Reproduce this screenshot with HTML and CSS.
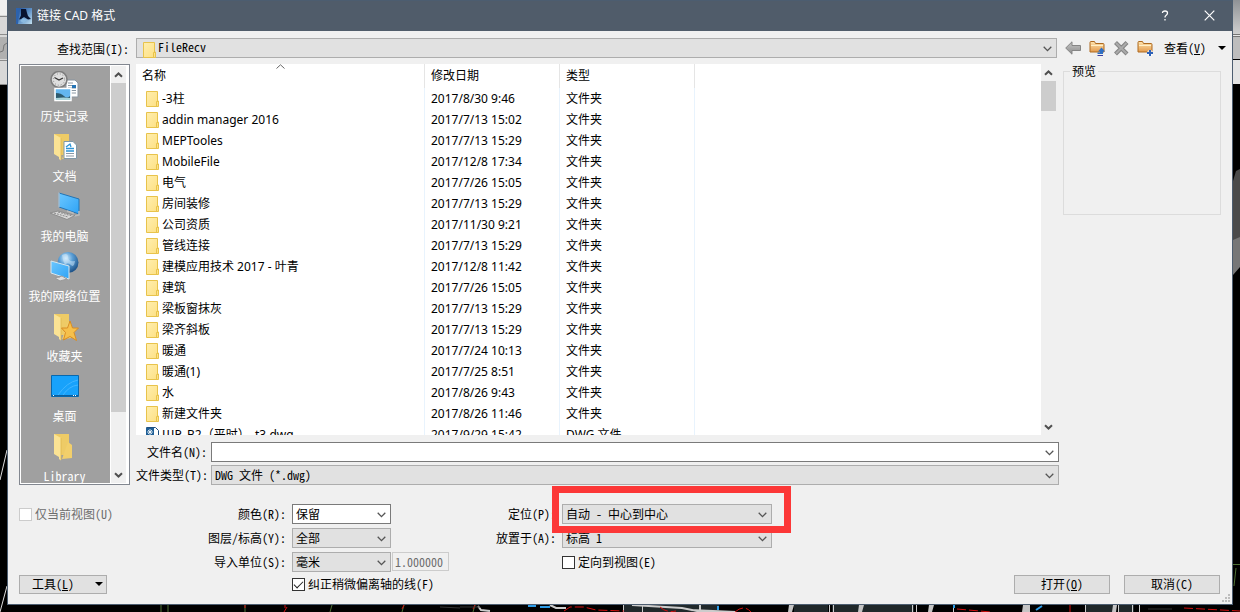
FILE: index.html
```html
<!DOCTYPE html>
<html lang="zh-CN">
<head>
<meta charset="utf-8">
<title>链接 CAD 格式</title>
<link rel="stylesheet" href="styles.css">
</head>
<body>
<svg width="0" height="0" class="defs" aria-hidden="true">
  <defs>
    <linearGradient id="gold" x1="0" y1="0" x2="1" y2="1"><stop offset="0" stop-color="#ffeeae"/><stop offset="1" stop-color="#fde083"/></linearGradient>
    <linearGradient id="orange" x1="0" y1="0" x2="0" y2="1"><stop offset="0" stop-color="#ffe5b0"/><stop offset="1" stop-color="#e39a4c"/></linearGradient>
    <linearGradient id="screen" x1="0" y1="0" x2="1" y2="1"><stop offset="0" stop-color="#6cc7ff"/><stop offset="1" stop-color="#2ea3f5"/></linearGradient>
    <linearGradient id="grey" x1="0" y1="0" x2="0" y2="1"><stop offset="0" stop-color="#c6c6c6"/><stop offset="1" stop-color="#8c8c8c"/></linearGradient>
    <radialGradient id="globe" cx=".4" cy=".3" r=".7"><stop offset="0" stop-color="#d5efff"/><stop offset=".45" stop-color="#5b9fd6"/><stop offset="1" stop-color="#1d5288"/></radialGradient>
    <linearGradient id="logo" x1="0" y1="0" x2="1" y2="1"><stop offset="0" stop-color="#1a4a94"/><stop offset=".5" stop-color="#5c8fc6"/><stop offset="1" stop-color="#c4e2f2"/></linearGradient>
    <linearGradient id="ribbon" x1="0" y1="0" x2="0" y2="1"><stop offset="0" stop-color="#8f9296"/><stop offset="1" stop-color="#cfcfcf"/></linearGradient>
  </defs>
  <symbol id="folder" viewBox="0 0 13 16"><path d="M.5.5h11v9.500h1v5.500H.5z" fill="url(#gold)" stroke="#e8c34b"/><path d="M10.500 15v-4.500h1.500" fill="none" stroke="#e8c34b"/></symbol>
  <symbol id="chev" viewBox="0 0 9 6"><path d="M.7.8 4.500 4.600 8.300.8" fill="none" stroke="#555" stroke-width="1.300"/></symbol>
  <symbol id="thick" viewBox="0 0 9 6"><path d="M1 4.700 4.500 1.400 8 4.700" fill="none" stroke="#505050" stroke-width="2"/></symbol>
  <symbol id="open-folder" viewBox="0 0 32 32"><path d="M5 3h15v21H8z" fill="#eecb66"/><path d="M19 11l4 3v13l-10 1z" fill="#f2cf6b"/><path d="M5 3l7 4v22.500l-2-1.500V26l-5-3z" fill="#fbe394"/><path d="M12 7v22" stroke="#e0b74e" stroke-width=".8"/></symbol>
</svg>

<svg class="backdrop" viewBox="0 0 1240 612" preserveAspectRatio="none" aria-hidden="true">
  <rect width="1240" height="612" fill="#000"/>
  <rect width="7" height="85" fill="#d8d8d8"/><rect width="7" height="15" fill="#f0f0f0"/>
  <path d="M0 16.500h7M0 34.500h7M0 60.500h7M0 84.500h7" stroke="#8c8c8c"/><rect y="37" width="7" height="22" fill="#b0b0b0"/>
  <path d="M0 52l3-1 1-6 3-2" fill="none" stroke="#777"/>
  <path d="M7 450 0 480M7 586 0 612" stroke="#ddd"/>
  <rect x="1233" width="7" height="34" fill="url(#ribbon)"/><rect x="1233" y="37" width="7" height="22" fill="#bdbdbd"/><rect x="1233" y="60" width="7" height="24" fill="#e4e4e4"/>
  <path d="M1233 35.500h7" stroke="#e8e8e8" stroke-width="2"/><path d="M1240 169l-4 2-3 10v59l7 0z" fill="#4a4a4a"/>
  <path d="M1233 240l7-3v30l-7 8z" fill="#777"/>
  <path d="M161 605v7M168 605v7M245 605v7M332 605l-2 7M404 605l-2 7M475 605l-2 7M1236 568l-2 18M1233 564.500h7" stroke="#4f7036"/>
  <path d="M245 605v3M285 605v3M287 607l-3 5M404 605l-2 4M475 605l-2 4M1070 612v-7" stroke="#d40f0f" fill="none"/>
  <path d="M623 605h20v7h-20zM643 605h76v7h-76zM794 605h34v7h-34zM832 605h82v7h-82zM869 605h42v7h-42zM1085 605h30v7h-30zM1119 605h15v7h-15z" fill="#20282a"/>
  <path d="M623.500 605v7M642.500 605v7M829.500 605v7M833.500 605v7M912.500 605v7M916.500 605v7M953.500 605v7M1085.500 605v7M1118.500 605v7M1132.500 605v7M1139.500 605v7" stroke="#ccc"/>
  <path d="M789 605h5l-2 7h-4zM859 605h5l-2 7h-4zM929 605h5l-2 7h-4zM1023 605h7v7h-8zM1113 605h4l-1 7h-4z" fill="#c4c4c4"/>
  <path d="M478 606l3 4 9 1M550 605l6 3h10M632 605l50 3 20 4M690 610l46 2M700 605v5" fill="none" stroke="#ccc" stroke-width="2"/>
  <path d="M440 607l20 1M460 607h20M1148 609h24" stroke="#333"/>
  <path d="M564 611l6-4h14l12 3 28 1M660 607q6 6 16 4M735 612q9-8 16 0M957 609l34 3M1184 608l56 3" fill="none" stroke="#d40f0f" stroke-dasharray="9 3"/>
  <path d="M528 606h8M540 607h10M718 606v4M954 605v3M1036 610l6-4" stroke="#2c9ce8" stroke-width="2"/>
</svg>

<main class="window">
  <header class="titlebar">
    <svg class="logo" viewBox="0 0 16 16" aria-hidden="true"><rect width="16" height="16" fill="url(#logo)"/><path d="M0 0h4L2 16H0z" fill="#2c62ad"/><path d="M5 1h5l1 4 1 3 3 3-3 .500-4-2.500-3 2-2 .500 2-4z" fill="#08122f"/><path d="M4 13l3-3 4 2-3 3z" fill="#8cbbe2"/></svg>
    <h1>链接 CAD 格式</h1>
    <button class="cap" aria-label="帮助"><svg width="8" height="11" viewBox="0 0 8 11"><path d="M1.500 3q0-2 2.500-2t2.500 2q0 1.300-1.300 2.200T4 7.500M4 9v1.500" fill="none" stroke="#fff" stroke-width="1.300"/></svg></button>
    <button class="cap" aria-label="关闭"><svg width="11" height="11" viewBox="0 0 11 11"><path d="M.7.700l9.600 9.600M10.300.7.700 10.300" stroke="#fff" stroke-width="1.200"/></svg></button>
  </header>

  <section class="lookin">
    <label class="lookin-label" for="look">查找范围(I):</label>
    <div class="combo lookin-combo">
      <svg class="combo-icon" aria-hidden="true"><use href="#folder"/></svg>
      <select id="look"><option>FileRecv</option></select>
      <svg class="chev"><use href="#chev"/></svg>
    </div>
    <nav class="toolbar">
      <button aria-label="后退"><svg viewBox="0 0 16 16"><path d="M.7 8 7 1.800V5.500h8.500v5H7v3.700z" fill="url(#grey)" stroke="#858585"/></svg></button>
      <button aria-label="向上一级"><svg viewBox="0 0 16 16"><path d="M1 12V2.500q0-1 1-1h3.500l1 2H14q1 0 1 1V12z" fill="url(#orange)" stroke="#ae6a20"/><path d="M2 5.500h12" stroke="#fff0c8"/><path d="M12.500 7.500l3.500 4h-2V14H8.500v-1.500H11v-1H9z" fill="#2e6fc4"/><path d="M8.500 15.500h5.500" stroke="#3a3f9e"/></svg></button>
      <button aria-label="删除"><svg viewBox="0 0 16 16"><path d="M2.500 2.500l11.500 11.500M14 2.500 2.500 14" stroke="#858585" stroke-width="4.200"/><path d="M3 3l10.500 10.500M13.500 3 3 13.500" stroke="#aaa" stroke-width="2"/></svg></button>
      <button aria-label="新建文件夹"><svg viewBox="0 0 16 16"><path d="M1 12V2.500q0-1 1-1h3.500l1 2H14q1 0 1 1V12z" fill="url(#orange)" stroke="#ae6a20"/><path d="M2 5.500h12" stroke="#fff0c8"/><path d="M10 13h6M13 10v6" stroke="#fff" stroke-width="3"/><path d="M10 13h6M13 10v6" stroke="#2e62b8" stroke-width="2"/></svg></button>
      <button class="view"><span>查看(<u>V</u>)</span><svg class="tri" viewBox="0 0 8 4"><path d="M0 0h8L4 4z"/></svg></button>
    </nav>
  </section>

  <section class="browse">
    <aside class="places">
      <ul>
        <li><a href="#"><svg viewBox="0 0 32 32"><path d="M17 9h9l3 3v14H17z" fill="#fff" stroke="#8995a0"/><path d="M19 12h5M19 14.500h5M19 17h8M19 19.500h8M19 22h8" stroke="#8a98a4"/><path d="M23 14h4v3h-4z" fill="#2474b5"/><circle cx="10" cy="8.500" r="8" fill="#dedede" stroke="#7e7e7e" stroke-width="1.600"/><circle cx="10" cy="8.500" r="5.700" fill="none" stroke="#888" stroke-dasharray="1 2"/><path d="M5.500 6.500 10 9l4-2" fill="none" stroke="#333" stroke-width="1.300"/><path d="M6 17.500h16v12H6z" fill="#63b6ef" stroke="#fff" stroke-width="1.500"/><path d="M7 22q5 0 8 3t6 0v2H7z" fill="#2d5a6e"/><path d="M7 27q8-1 14 0v2H7z" fill="#a9d5da"/></svg><span>历史记录</span></a></li>
        <li><a href="#"><svg viewBox="0 0 32 32"><use href="#open-folder"/><path d="M15 10.500h9l3.500 3.500v13.500H15z" fill="#fff" stroke="#7f98a8"/><path d="M17 16l4-3 1 3M17 17.500h8M17 20h8" fill="none" stroke="#2d94d6" stroke-width="1.300"/><path d="M17 22.500h8M17 25h8" stroke="#8a98a4"/></svg><span>文档</span></a></li>
        <li><a href="#"><svg viewBox="0 0 32 32"><path d="M10 2l20 6v15L10 16z" fill="url(#screen)" stroke="#2374b4"/><path d="M10 1.700v14.500" stroke="#ddd"/><path d="M30 20v4l-5 1M18 20l6 2v3" fill="none" stroke="#bbb" stroke-width="1.500"/><path d="M1 22l8-2 17 4.500-8 4z" fill="#d9d9d9" stroke="#8d8d8d"/><path d="M5 22l14 4M9 21l14 4" stroke="#888" stroke-dasharray="2 1"/></svg><span>我的电脑</span></a></li>
        <li><a href="#"><svg viewBox="0 0 32 32"><circle cx="19" cy="11.500" r="10.500" fill="url(#globe)"/><path d="M13 4q6-3 6 2t7 4q-1 7-4 4t-5-1-4-9z" fill="#d3eafa" opacity=".5"/><path d="M2 10l18 5v13L2 22z" fill="url(#screen)" stroke="#d7e6ee"/><path d="M10 25v2M6 27l7-2 5 3-7 2z" fill="#ddd" stroke="#999"/></svg><span>我的网络位置</span></a></li>
        <li><a href="#"><svg viewBox="0 0 32 32"><use href="#open-folder"/><path d="M21 10l2.500 7h6l-4.500 4.500 2.500 8-6.500-4-6.500 3.500 2-7.500-4-4.500h6z" fill="#f6c04b" stroke="#d88c24"/></svg><span>收藏夹</span></a></li>
        <li><a href="#"><svg viewBox="0 0 32 32"><path d="M2.500 4.500h27v21h-27z" fill="#18a2fb" stroke="#0868ad"/><path d="M9 24Q18 11 29 9M14 24q6-9 15-10" fill="none" stroke="#42b5ff"/><path d="M3 24.500h26" stroke="#0b5f9e"/><path d="M4 24.500h1M24 24.500h4" stroke="#fff" stroke-dasharray="1 1"/></svg><span>桌面</span></a></li>
        <li><a href="#"><svg viewBox="0 0 32 32"><use href="#open-folder"/></svg><span>Library</span></a></li>
      </ul>
      <div class="scroll places-scroll"><svg class="arrow"><use href="#thick"/></svg><i></i><svg class="arrow down"><use href="#thick"/></svg></div>
    </aside>

    <div class="center">
      <div class="listing">
        <div class="files">
          <svg class="sort" viewBox="0 0 9 5"><path d="M.5 4.500 4.500.8l4 3.700" fill="none" stroke="#666"/></svg>
          <table>
            <colgroup><col class="c-name"><col class="c-date"><col class="c-type"><col></colgroup>
            <thead><tr><th>名称</th><th>修改日期</th><th>类型</th><th></th></tr></thead>
            <tbody>
              <tr><td><svg><use href="#folder"/></svg>-3柱</td><td>2017/8/30 9:46</td><td>文件夹</td><td></td></tr>
              <tr><td><svg><use href="#folder"/></svg>addin manager 2016</td><td>2017/7/13 15:02</td><td>文件夹</td><td></td></tr>
              <tr><td><svg><use href="#folder"/></svg>MEPTooles</td><td>2017/7/13 15:29</td><td>文件夹</td><td></td></tr>
              <tr><td><svg><use href="#folder"/></svg>MobileFile</td><td>2017/12/8 17:34</td><td>文件夹</td><td></td></tr>
              <tr><td><svg><use href="#folder"/></svg>电气</td><td>2017/7/26 15:05</td><td>文件夹</td><td></td></tr>
              <tr><td><svg><use href="#folder"/></svg>房间装修</td><td>2017/7/13 15:29</td><td>文件夹</td><td></td></tr>
              <tr><td><svg><use href="#folder"/></svg>公司资质</td><td>2017/11/30 9:21</td><td>文件夹</td><td></td></tr>
              <tr><td><svg><use href="#folder"/></svg>管线连接</td><td>2017/7/13 15:29</td><td>文件夹</td><td></td></tr>
              <tr><td><svg><use href="#folder"/></svg>建模应用技术 2017 - 叶青</td><td>2017/12/8 11:42</td><td>文件夹</td><td></td></tr>
              <tr><td><svg><use href="#folder"/></svg>建筑</td><td>2017/7/26 15:05</td><td>文件夹</td><td></td></tr>
              <tr><td><svg><use href="#folder"/></svg>梁板窗抹灰</td><td>2017/7/13 15:29</td><td>文件夹</td><td></td></tr>
              <tr><td><svg><use href="#folder"/></svg>梁齐斜板</td><td>2017/7/13 15:29</td><td>文件夹</td><td></td></tr>
              <tr><td><svg><use href="#folder"/></svg>暖通</td><td>2017/7/24 10:13</td><td>文件夹</td><td></td></tr>
              <tr><td><svg><use href="#folder"/></svg>暖通(1)</td><td>2017/7/25 8:51</td><td>文件夹</td><td></td></tr>
              <tr><td><svg><use href="#folder"/></svg>水</td><td>2017/8/26 9:43</td><td>文件夹</td><td></td></tr>
              <tr><td><svg><use href="#folder"/></svg>新建文件夹</td><td>2017/8/26 11:46</td><td>文件夹</td><td></td></tr>
              <tr><td><svg viewBox="0 0 13 16"><path d="M.5.5h9l3 3V15H.5z" fill="#fff" stroke="#1f4f80"/><path d="M0 1h8v8H0z" fill="#1f5f96"/><path d="M1 5h6M4 2v6M2 3l4 4M6 3 2 7" stroke="#fff" stroke-width=".8"/><path d="M0 8h13v7H0z" fill="#1f5f96"/></svg>ШР_B2（平时）_t3.dwg</td><td>2017/9/29 15:42</td><td>DWG 文件</td><td></td></tr>
            </tbody>
          </table>
        </div>
        <div class="scroll list-scroll"><svg class="arrow"><use href="#thick"/></svg><i></i><svg class="arrow down"><use href="#thick"/></svg></div>
      </div>
      <div class="field">
        <label for="fname">文件名(N):</label>
        <div class="combo white"><input id="fname" type="text"><svg class="chev"><use href="#chev"/></svg></div>
      </div>
      <div class="field">
        <label for="ftype">文件类型(T):</label>
        <div class="combo"><select id="ftype"><option>DWG 文件 (*.dwg)</option></select><svg class="chev"><use href="#chev"/></svg></div>
      </div>
    </div>

    <fieldset class="preview"><legend>预览</legend></fieldset>
  </section>

  <section class="options">
    <label class="check dim a1"><input type="checkbox" disabled>仅当前视图(U)</label>
    <label class="cap-label b1" for="color">颜色(R):</label>
    <div class="combo white short c1"><select id="color"><option>保留</option></select><svg class="chev"><use href="#chev"/></svg></div>
    <label class="cap-label d1" for="pos">定位(P):</label>
    <div class="combo e1"><select id="pos"><option>自动 - 中心到中心</option></select><svg class="chev"><use href="#chev"/></svg><span class="highlight"></span></div>

    <label class="cap-label b2" for="layer">图层/标高(Y):</label>
    <div class="combo short c2"><select id="layer"><option>全部</option></select><svg class="chev"><use href="#chev"/></svg></div>
    <label class="cap-label d2" for="place">放置于(A):</label>
    <div class="combo e2"><select id="place"><option>标高 1</option></select><svg class="chev"><use href="#chev"/></svg></div>

    <label class="cap-label b3" for="unit">导入单位(S):</label>
    <div class="unit c3">
      <div class="combo short"><select id="unit"><option>毫米</option></select><svg class="chev"><use href="#chev"/></svg></div>
      <input class="factor" type="text" value="1.000000" aria-label="单位比例" disabled>
    </div>
    <label class="check e3"><input type="checkbox">定向到视图(E)</label>

    <div class="a4"><button class="btn tools"><span>工具(<u>L</u>)</span><svg class="tri" viewBox="0 0 8 4"><path d="M0 0h8L4 4z"/></svg></button></div>
    <label class="check c4"><input type="checkbox" checked>纠正稍微偏离轴的线(F)</label>
    <div class="actions"><button class="btn">打开(<u>O</u>)</button><button class="btn">取消(C)</button></div>
  </section>
  <svg class="grip" viewBox="0 0 8 8" aria-hidden="true"><path d="M6 0h2v2H6zM3 3h2v2H3zM6 3h2v2H6zM0 6h2v2H0zM3 6h2v2H3zM6 6h2v2H6z" fill="#bdbdbd"/></svg>
</main>
</body>
</html>
```

FILE: styles.css
```css
* { box-sizing: border-box; }
body {
  margin: 0;
  height: 100vh;
  overflow: hidden;
  background: #000;
  font: 12px/16px "Noto Sans Mono CJK SC", "Liberation Mono", "Noto Sans CJK SC", monospace;
  color: #000;
}
button, input, select { font: inherit; color: inherit; margin: 0; }
.defs { position: absolute; }
.backdrop { position: absolute; inset: 0; width: 100%; height: 100%; }

.window {
  position: relative;
  height: calc(100vh - 7px);
  margin: 0 7px;
  display: flex;
  flex-direction: column;
  background: #f0f0f0;
  border: 1px solid #4c5d70;
}
.titlebar {
  height: 30px;
  flex: none;
  display: flex;
  align-items: center;
  background: #505c6a;
  color: #fff;
  padding-left: 8px;
}
.titlebar h1 {
  flex: 1;
  margin: 0 0 0 5px;
  font: 12px/16px "Noto Sans", "Noto Sans CJK SC", sans-serif;
}
.logo { width: 16px; height: 16px; }
.cap { width: 45px; height: 28px; padding: 0; border: 0; background: none; }

.lookin { flex: none; height: 33px; display: flex; align-items: center; padding: 0 11px; }
.lookin-label { width: 110px; text-align: right; margin-right: 7px; padding-top: 3px; }
.lookin-combo { flex: 1; height: 24px; margin-right: 6px; }
.combo-icon { position: absolute; left: 6px; top: 3px; width: 13px; height: 16px; }
.toolbar { width: 158px; display: flex; align-items: center; gap: 8px; padding-left: 2px; }
.toolbar button { padding: 0; border: 0; background: none; height: 16px; flex: none; }
.toolbar button > svg { width: 16px; height: 16px; display: block; }
.toolbar .view { display: flex; align-items: center; gap: 12px; padding-left: 3px; white-space: nowrap; }
.toolbar .view .tri, .tools .tri { width: 8px; height: 4px; flex: none; }

.combo { position: relative; height: 20px; min-width: 0; background: #e1e1e1; border: 1px solid #adadad; }
.combo.white { background: #fff; border-color: #7a7a7a; }
.combo select, .combo input {
  display: block;
  width: 100%;
  height: 100%;
  border: 0;
  outline: 0;
  background: none;
  appearance: none;
  padding: 0 18px 0 3px;
}
.lookin-combo select { padding: 0 18px 2px 21px; }
.combo .chev { position: absolute; right: 4px; top: 50%; width: 9px; height: 6px; margin-top: -2px; pointer-events: none; }

.browse { flex: 1; min-height: 0; display: flex; padding: 0 11px; }
.places {
  width: 111px;
  flex: none;
  display: flex;
  border: 1px solid #828790;
  outline: 1px solid #fff;
  outline-offset: -2px;
  padding: 1px;
  margin-right: 6px;
  background: #a0a0a0;
}
.places ul { flex: 1; height: 100%; margin: 0; padding: 0; list-style: none; overflow: hidden; }
.places li { height: 60px; padding: 5px 2px 0 0; }
.places a { display: flex; flex-direction: column; align-items: center; gap: 6px; color: #fff; text-decoration: none; line-height: 14px; white-space: nowrap; }
.places a > svg { width: 32px; height: 32px; }
.scroll { flex: none; display: flex; flex-direction: column; align-items: center; background: #f0f0f0; }
.scroll .arrow { width: 9px; height: 6px; margin: 6px 0 5px; flex: none; }
.scroll .down { transform: rotate(180deg); margin-top: auto; }
.scroll i { width: 100%; background: #cdcdcd; }
.places-scroll { width: 18px; border: solid #fff; border-width: 0 2px 0 1px; }
.places-scroll i { height: 79%; }
.list-scroll { width: 15px; }
.list-scroll i { height: 30px; }

.center { flex: 1; min-width: 0; display: flex; flex-direction: column; gap: 3px; margin-right: 4px; }
.listing { flex: 1; min-height: 0; display: flex; margin: 0 3px 4px 0; }
.files { position: relative; flex: 1; min-width: 0; overflow: hidden; background: #fff; }
.sort { position: absolute; left: 140px; top: 0; width: 9px; height: 5px; }
table { width: 100%; table-layout: fixed; border-collapse: separate; border-spacing: 0; font: 12px/16px "Noto Sans", "Noto Sans CJK SC", sans-serif; }
.c-name { width: 289px; }
.c-date, .c-type { width: 135px; }
th { height: 24px; padding: 0 6px; text-align: left; font-weight: normal; border-right: 1px solid #e5e5e5; }
td { height: 21px; padding: 0 6px; border-right: 1px solid #e8f3fd; white-space: nowrap; }
th:last-child, td:last-child { border-right: 0; }
td:first-child { padding-left: 10px; }
td svg { width: 13px; height: 16px; margin-right: 3px; vertical-align: top; }

.field { flex: none; display: flex; align-items: center; }
.field label { width: 75px; padding-right: 4px; text-align: right; white-space: nowrap; flex: none; }
.field .combo { flex: 1; }

.preview { width: 158px; flex: none; height: 151px; margin: 0; padding: 0; border: 1px solid #dcdcdc; }
.preview legend { margin-left: 6px; padding: 0 2px; line-height: 14px; }

.options {
  flex: none;
  display: grid;
  grid-template-columns: 120px 141px 157px 101px 210px 1fr;
  grid-template-rows: 20px 20px 20px 16px;
  gap: 4px 6px;
  align-items: center;
  padding: 19px 12px 12px 11px;
  white-space: nowrap;
}
.a1, .a4 { grid-column: 1; }
.b1, .b2, .b3 { grid-column: 2; }
.c1, .c2, .c3, .c4 { grid-column: 3; }
.d1, .d2 { grid-column: 4; }
.e1, .e2, .e3 { grid-column: 5; }
.a1, .b1, .c1, .d1, .e1 { grid-row: 1; }
.b2, .c2, .d2, .e2 { grid-row: 2; }
.b3, .c3, .e3 { grid-row: 3; }
.a4, .c4, .actions { grid-row: 4; }
.actions { grid-column: 6; display: flex; justify-content: flex-end; gap: 14px; }
.cap-label { text-align: right; }
.short { width: 99px; }
.unit { display: flex; gap: 1px; }
.factor { width: 57px; height: 19px; padding: 0 2px; border: 1px solid #ccc; background: #f0f0f0; color: #6d6d6d; }
.check { display: flex; align-items: center; gap: 3px; }
.check input { appearance: none; width: 13px; height: 13px; background: #fff; border: 1px solid #333; flex: none; }
.check input:checked::after { content: ""; display: block; width: 8px; height: 4px; margin: 2px 0 0 1px; border: solid #222; border-width: 0 0 1px 1px; transform: rotate(-45deg); }
.check.dim { color: #6d6d6d; }
.check.dim input { border-color: #ccc; }
.e1 .highlight { position: absolute; inset: -19px -20px -10px -11px; border: 7px solid #fc3737; z-index: 2; pointer-events: none; }
.a4 { display: flex; }
.btn { width: 96px; height: 19px; padding: 0; border: 1px solid #adadad; background: #e1e1e1; line-height: 16px; }
.tools { width: 88px; display: flex; align-items: center; justify-content: flex-end; gap: 21px; padding-right: 3px; }
.grip { position: absolute; right: 2px; bottom: 2px; width: 8px; height: 8px; }
```
